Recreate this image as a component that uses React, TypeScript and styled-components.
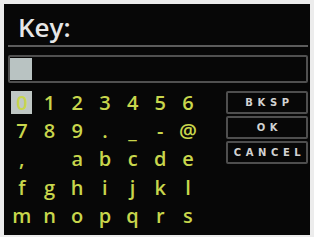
import React from "react";
import styled, { createGlobalStyle } from "styled-components";

const Global = createGlobalStyle`
  html, body { margin: 0; padding: 0; background: #ececec; }
  body { width: 314px; height: 237px; overflow: hidden; }
`;

const Screen = styled.div`
  box-sizing: border-box;
  margin: 4px 0 0 4px;
  width: 306px;
  height: 231px;
  background: #070707;
  padding: 0 2px 0 4px;
  display: flex;
  flex-direction: column;
`;

const Title = styled.div`
  height: 41px;
  box-sizing: border-box;
  padding: 6px 0 0 10px;
  font-family: "Open Sans", "Noto Sans", sans-serif;
  font-weight: 600;
  font-size: 26px;
  line-height: 34px;
  color: #e6e6e6;
`;

const Divider = styled.div`
  height: 2px;
  background: #5c5c5c;
`;

const Input = styled.div`
  box-sizing: border-box;
  margin-top: 8px;
  height: 28px;
  border: 2px solid #505050;
  border-radius: 2px;
  padding: 1px 0 0 0;
  display: flex;
  align-items: flex-start;
`;

const Cursor = styled.div`
  width: 22px;
  height: 22px;
  background: #b9c3c2;
`;

const Board = styled.div`
  display: flex;
  margin-top: 5px;
`;

const Keys = styled.div`
  display: grid;
  grid-template-columns: repeat(7, 27.7px);
  grid-auto-rows: 28.3px;
`;

const Key = styled.div<{ $active?: boolean }>`
  display: flex;
  align-items: center;
  justify-content: center;
  font-family: "Open Sans", "Noto Sans", sans-serif;
  font-weight: 600;
  font-size: 20px;
  color: #c8d64c;
  span {
    display: flex;
    align-items: center;
    justify-content: center;
    width: 21px;
    height: 23px;
    line-height: 23px;
    background: ${(p) => (p.$active ? "#bfc7c4" : "transparent")};
  }
`;

const Buttons = styled.div`
  margin-left: auto;
  padding-top: 3px;
  display: flex;
  flex-direction: column;
  gap: 2px;
  width: 82px;
`;

const Button = styled.div`
  box-sizing: border-box;
  height: 23px;
  border: 2px solid #4e4e4e;
  border-radius: 2px;
  display: flex;
  align-items: center;
  justify-content: center;
  font-family: "DejaVu Sans", "Liberation Sans", sans-serif;
  font-weight: 700;
  font-size: 10px;
  letter-spacing: 4.6px;
  padding-left: 5px;
  color: #d2d2d2;
`;

const rows = [
  ["0", "1", "2", "3", "4", "5", "6"],
  ["7", "8", "9", ".", "_", "-", "@"],
  [",", " ", "a", "b", "c", "d", "e"],
  ["f", "g", "h", "i", "j", "k", "l"],
  ["m", "n", "o", "p", "q", "r", "s"],
];

export default function App() {
  return (
    <>
      <Global />
      <Screen>
        <Title>Key:</Title>
        <Divider />
        <Input>
          <Cursor />
        </Input>
        <Board>
          <Keys>
            {rows.flat().map((c, i) => (
              <Key key={i} $active={i === 0}>
                <span>{c === " " ? "\u00a0" : c}</span>
              </Key>
            ))}
          </Keys>
          <Buttons>
            <Button>BKSP</Button>
            <Button>OK</Button>
            <Button>CANCEL</Button>
          </Buttons>
        </Board>
      </Screen>
    </>
  );
}
